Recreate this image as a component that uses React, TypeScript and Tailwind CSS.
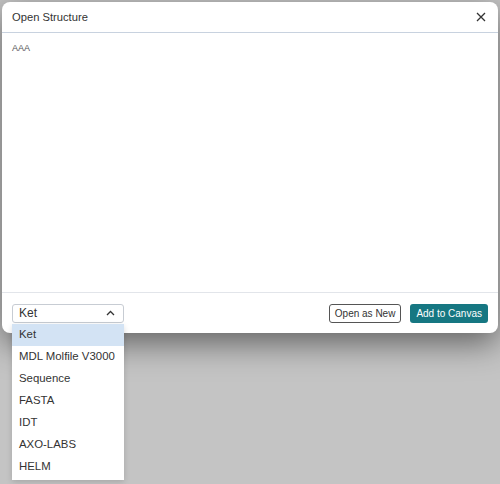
import { useState } from 'react';

const formats = ['Ket', 'MDL Molfile V3000', 'Sequence', 'FASTA', 'IDT', 'AXO-LABS', 'HELM'];

export default function App() {
    const [selected, setSelected] = useState('Ket');

    return (
        <div className="h-[484px] w-[500px] bg-[#c4c4c4] p-[2px] font-['Liberation_Sans',Arial,sans-serif]">
            <div className="relative flex h-[331px] flex-col rounded-lg bg-white shadow-[0_10px_32px_rgba(0,0,0,0.5)]">
                {/* header */}
                <div className="flex h-[31px] items-center justify-between border-b border-[#c8d2df] pl-[10px] pr-[9px]">
                    <span className="text-[11.2px] text-[#333]">Open Structure</span>
                    <button className="flex h-4 w-4 items-center justify-center text-[#333]">
                        <svg width="10" height="10" viewBox="0 0 10 10">
                            <path d="M1 1L9 9M9 1L1 9" stroke="currentColor" strokeWidth="1.3" />
                        </svg>
                    </button>
                </div>

                {/* content */}
                <div className="flex-1 px-[10px] pt-[10px]">
                    <span className="block text-[9px] leading-[10px] text-[#555]">AAA</span>
                </div>

                {/* footer */}
                <div className="flex h-[41px] items-center justify-between border-t border-[#e2e5ea] pl-[10px] pr-[10px]">
                    <div className="relative">
                        <div className="flex h-[19px] w-[112px] items-center justify-between rounded-[3px] border border-[#c7ccd3] pl-[6px] pr-[8px] text-[12px] text-[#333]">
                            <span>{selected}</span>
                            <svg width="9" height="6" viewBox="0 0 9 6">
                                <path d="M1 5L4.5 1.5L8 5" fill="none" stroke="#333" strokeWidth="1.3" />
                            </svg>
                        </div>
                        <ul className="absolute left-0 top-[20px] z-10 w-[112px] bg-white pb-[2px] shadow-[0_2px_6px_rgba(0,0,0,0.15)]">
                            {formats.map((f) => (
                                <li
                                    key={f}
                                    onClick={() => setSelected(f)}
                                    className={
                                        'flex h-[22px] items-center px-[7px] text-[11.4px] text-[#333] ' +
                                        (f === selected ? 'bg-[#d3e3f4]' : 'bg-white')
                                    }
                                >
                                    {f}
                                </li>
                            ))}
                        </ul>
                    </div>
                    <div className="flex gap-[9px]">
                        <button className="flex h-[19px] items-center rounded-[3px] border border-[#555] px-[5px] text-[10px] text-[#333]">
                            Open as New
                        </button>
                        <button className="flex h-[19px] items-center rounded-[3px] bg-[#167782] px-[6px] text-[10px] text-white">
                            Add to Canvas
                        </button>
                    </div>
                </div>
            </div>
        </div>
    );
}
